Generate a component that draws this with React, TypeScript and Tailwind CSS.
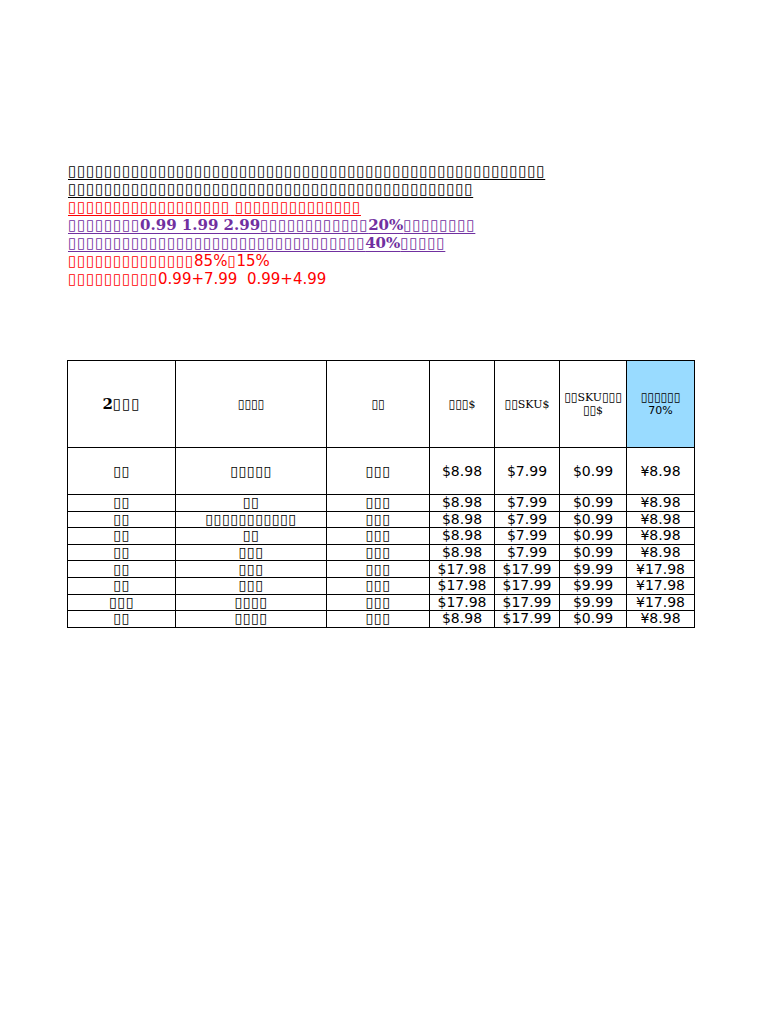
import React from "react";

const sans = { fontFamily: '"DejaVu Sans", sans-serif' };
const serif = { fontFamily: '"DejaVu Serif", serif' };

// missing-glyph boxes, as they appear in the source document
function T({ n, c = "tracking-[0.75px]" }: { n: number; c?: string }) {
  return <span className={c}>{"▯".repeat(n)}</span>;
}

const rows: [number, number, number, string, string, string, string][] = [
  [2, 2, 3, "$8.98", "$7.99", "$0.99", "¥8.98"],
  [2, 11, 3, "$8.98", "$7.99", "$0.99", "¥8.98"],
  [2, 2, 3, "$8.98", "$7.99", "$0.99", "¥8.98"],
  [2, 3, 3, "$8.98", "$7.99", "$0.99", "¥8.98"],
  [2, 3, 3, "$17.98", "$17.99", "$9.99", "¥17.98"],
  [2, 3, 3, "$17.98", "$17.99", "$9.99", "¥17.98"],
  [3, 4, 3, "$17.98", "$17.99", "$9.99", "¥17.98"],
  [2, 4, 3, "$8.98", "$17.99", "$0.99", "¥8.98"],
];

const cell = "border border-black p-0 whitespace-nowrap";
const tb = "tracking-[0.6px]";
const hb = "text-[12px] tracking-normal";

export default function App() {
  return (
    <div className="w-[768px] h-[1024px] bg-white pt-[162px] pl-[67px]" style={sans}>
      {/* Notes */}
      <div className="text-[15px] leading-[18px] pl-[1px]">
        <div className="text-black underline underline-offset-[3px]">
          <T n={53} />
        </div>
        <div className="text-black underline underline-offset-[3px]">
          <T n={45} />
        </div>
        <div className="text-[#ff0000] underline underline-offset-[3px]">
          <T n={18} /> <T n={14} />
        </div>
        <div className="text-[#7030a0] underline underline-offset-[3px]">
          <T n={8} />
          <b style={serif}>0.99 1.99 2.99</b>
          <T n={12} />
          <b style={serif}>20%</b>
          <T n={8} />
        </div>
        <div className="text-[#7030a0] underline underline-offset-[3px]">
          <T n={33} />
          <b style={serif}>40%</b>
          <T n={5} />
        </div>
        <div className="text-[#ff0000]">
          <T n={14} />
          85%
          <T n={1} />
          15%
        </div>
        <div className="text-[#ff0000]">
          <T n={10} />
          0.99+7.99&nbsp;&nbsp;0.99+4.99
        </div>
      </div>

      {/* Price table */}
      <table className="mt-[72px] border-collapse text-black text-[14px] leading-[15px] text-center">
        <colgroup>
          <col className="w-[108px]" />
          <col className="w-[151px]" />
          <col className="w-[103px]" />
          <col className="w-[65px]" />
          <col className="w-[65px]" />
          <col className="w-[67px]" />
          <col className="w-[68px]" />
        </colgroup>
        <thead>
          <tr className="h-[87px]" style={serif}>
            <th className="border border-black text-[15px] font-bold">
              2<T n={3} c="tracking-[1px]" />
            </th>
            <th className="border border-black text-[11px] font-normal">
              <T n={4} c={hb} />
            </th>
            <th className="border border-black text-[11px] font-normal">
              <T n={2} c={hb} />
            </th>
            <th className="border border-black text-[11px] font-normal">
              <T n={3} c={hb} />$
            </th>
            <th className="border border-black text-[11px] font-normal">
              <T n={2} c={hb} />
              SKU$
            </th>
            <th className="border border-black text-[11px] font-normal leading-[13px] px-[1px]">
              <T n={2} c={hb} />
              SKU
              <T n={3} c={hb} />
              <br />
              <T n={2} c={hb} />$
            </th>
            <th className="border border-black text-[11px] font-normal leading-[13px] bg-[#99dbff]" style={sans}>
              <T n={6} c={hb} />
              <br />
              70%
            </th>
          </tr>
        </thead>
        <tbody>
          <tr className="h-[47px]">
            <td className="border border-black">
              <T n={2} c={tb} />
            </td>
            <td className="border border-black">
              <T n={5} c={tb} />
            </td>
            <td className="border border-black">
              <T n={3} c={tb} />
            </td>
            <td className="border border-black">$8.98</td>
            <td className="border border-black">$7.99</td>
            <td className="border border-black">$0.99</td>
            <td className="border border-black">¥8.98</td>
          </tr>
          {rows.map((r, i) => (
            <tr key={i} className="h-[16.6px]">
              <td className={cell}>
                <T n={r[0]} c={tb} />
              </td>
              <td className={cell}>
                <T n={r[1]} c={tb} />
              </td>
              <td className={cell}>
                <T n={r[2]} c={tb} />
              </td>
              <td className={cell}>{r[3]}</td>
              <td className={cell}>{r[4]}</td>
              <td className={cell}>{r[5]}</td>
              <td className={cell}>{r[6]}</td>
            </tr>
          ))}
        </tbody>
      </table>
    </div>
  );
}
